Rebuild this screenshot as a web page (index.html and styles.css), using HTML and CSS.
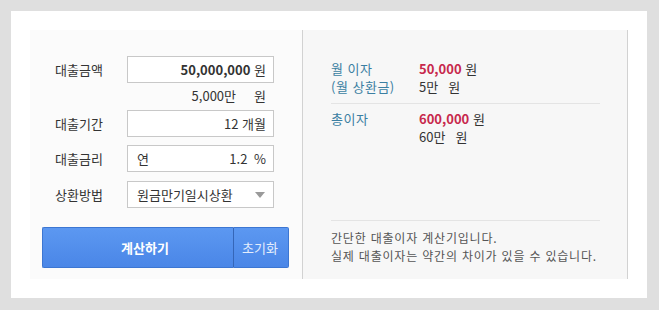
FILE: index.html
```html
<!DOCTYPE html>
<html lang="ko">
<head>
    <meta charset="UTF-8">
    <meta name="viewport" content="width=device-width, initial-scale=1.0">
    <title>대출이자 계산기</title>
    <link rel="stylesheet" href="styles.css">
</head>
<body>
    <div class="frame">
        <div class="card">
            <div class="calc">
                <div class="field">
                    <span class="label">대출금액</span>
                    <div class="box"><b class="num">50,000,000</b>&nbsp;원</div>
                </div>
                <div class="sub">5,000만<span class="unit">원</span></div>
                <div class="field">
                    <span class="label">대출기간</span>
                    <div class="box">12 개월</div>
                </div>
                <div class="field rate">
                    <span class="label">대출금리</span>
                    <div class="box split"><span>연</span><span>1.2 <span class="pct">%</span></span></div>
                </div>
                <div class="field method">
                    <span class="label">상환방법</span>
                    <div class="box split select">
                        <span>원금만기일시상환</span>
                        <svg width="10" height="6" viewBox="0 0 10 6"><path d="M0 0H10L5 6Z" fill="#9a9a9a"/></svg>
                    </div>
                </div>
                <div class="actions">
                    <button class="btn-calc">계산하기</button>
                    <button class="btn-reset">초기화</button>
                </div>
            </div>
            <div class="result">
                <div class="summary">
                    <div class="res-item">
                        <div class="res-label">월 이자<br>(월 상환금)</div>
                        <div class="res-val">
                            <div><b class="red">50,000</b> 원</div>
                            <div>5만<span class="gap">원</span></div>
                        </div>
                    </div>
                    <div class="divider"></div>
                    <div class="res-item">
                        <div class="res-label">총이자</div>
                        <div class="res-val">
                            <div><b class="red">600,000</b> 원</div>
                            <div>60만<span class="gap">원</span></div>
                        </div>
                    </div>
                </div>
                <div class="note">
                    <p>간단한 대출이자 계산기입니다.</p>
                    <p>실제 대출이자는 약간의 차이가 있을 수 있습니다.</p>
                </div>
            </div>
        </div>
    </div>
</body>
</html>
```

FILE: styles.css
```css
body {
    margin: 0;
    background-color: #dfdfdf;
    font-family: "Noto Sans CJK KR", "Noto Sans", sans-serif;
    font-size: 12px;
    color: #333;
}

.frame {
    height: 310px;
    box-sizing: border-box;
    padding: 11px 12px 12px 11px;
}

.card {
    display: flex;
    height: 287px;
    box-sizing: border-box;
    padding: 19px;
    background-color: #fff;
}

.calc {
    width: 272px;
    box-sizing: border-box;
    padding: 26px 13px 0 12px;
    background-color: #fbfbfb;
}

.field {
    display: flex;
    align-items: center;
    padding-left: 13px;
}

.label {
    width: 72px;
    font-size: 13px;
}

.box {
    display: flex;
    align-items: center;
    justify-content: flex-end;
    width: 147px;
    height: 27px;
    box-sizing: border-box;
    padding: 0 7px 0 9px;
    border: 1px solid #c8c8c8;
    background-color: #fff;
    font-size: 13px;
}

.box.split {
    justify-content: space-between;
}

.num {
    font-size: 13px;
}

.pct {
    margin-left: 3px;
}

.sub {
    width: 147px;
    height: 27px;
    margin-left: 85px;
    box-sizing: border-box;
    padding: 3px 8px 0 0;
    line-height: 20px;
    text-align: right;
    font-size: 13px;
}

.unit {
    margin-left: 18px;
}

.rate {
    margin-top: 8px;
}

.method {
    margin-top: 9px;
}

.select {
    padding-right: 8px;
}

.actions {
    display: flex;
    margin-top: 19px;
}

button {
    height: 41px;
    border: 1px solid #3c76d2;
    background: linear-gradient(#5c98f1, #4a86e7);
    font-family: inherit;
    font-size: 13px;
    cursor: pointer;
}

.btn-calc {
    width: 191px;
    padding-left: 20px;
    border-right: none;
    border-radius: 2px 0 0 2px;
    color: #fff;
    font-weight: bold;
}

.btn-reset {
    width: 56px;
    padding-right: 8px;
    border-left: 1px solid #3566b8;
    border-radius: 0 2px 2px 0;
    color: #e4edfc;
}

.result {
    flex: 1;
    display: flex;
    flex-direction: column;
    justify-content: space-between;
    padding: 30px 27px 14px 28px;
    border-left: 1px solid #d2d2d2;
    border-right: 1px solid #d2d2d2;
    background-color: #f7f7f7;
}

.res-item {
    display: flex;
    line-height: 18px;
    font-size: 13px;
}

.res-label {
    width: 88px;
    color: #3b7fa2;
    letter-spacing: 0.5px;
}

.red {
    color: #c7284c;
}

.gap {
    margin-left: 10px;
}

.divider {
    width: 269px;
    height: 1px;
    margin: 7px 0 6px;
    background-color: #e4e4e4;
}

.note {
    width: 269px;
    padding-top: 8px;
    border-top: 1px solid #e4e4e4;
    line-height: 18px;
    font-size: 12px;
    letter-spacing: 0.8px;
    color: #555;
    white-space: nowrap;
}

.note p {
    margin: 0;
}
```
